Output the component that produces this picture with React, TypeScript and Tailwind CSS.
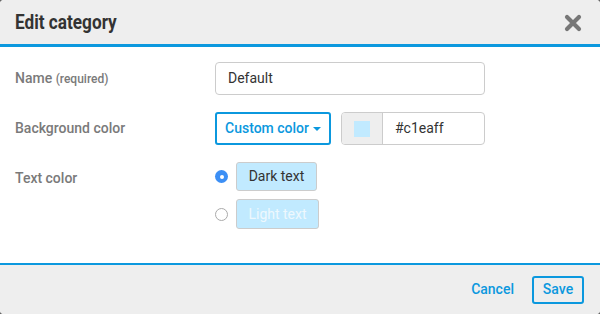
import React from "react";

function Label({ children }: { children: React.ReactNode }) {
  return (
    <div className="w-[200px] text-[14px] font-medium text-[#7a7a7a]">{children}</div>
  );
}

export default function App() {
  return (
    <div className="h-[314px] w-[600px] bg-[#666] font-['Roboto',sans-serif]">
      <div className="flex h-full flex-col overflow-hidden rounded-[4px] bg-white">
        <div className="flex h-[47px] items-center justify-between border-b-[3px] border-[#0b98de] bg-[#eee] pl-[15px] pr-[18px]">
          <h1 className="origin-left scale-x-[0.86] text-[20px] font-bold leading-none text-[#333]">
            Edit category
          </h1>
          <svg width="18" height="18" viewBox="0 0 18 18" className="mt-[1px]">
            <path
              d="M3 3 L15 15 M15 3 L3 15"
              stroke="#777"
              strokeWidth="4.2"
              strokeLinecap="round"
            />
          </svg>
        </div>

        <div className="flex flex-1 flex-col gap-[17px] pl-[15px] pt-[15px]">
          <div className="flex items-center">
            <Label>
              Name <span className="text-[12px]">(required)</span>
            </Label>
            <div className="flex h-[33px] w-[270px] items-center rounded-[4px] border border-[#ccc] px-[12px] text-[14px] text-[#333]">
              Default
            </div>
          </div>

          <div className="flex items-center">
            <Label>Background color</Label>
            <button className="flex h-[33px] w-[116px] items-center justify-center gap-[4px] rounded-[3px] border-2 border-[#0b98de] text-[14px] font-medium text-[#0b98de]">
              Custom color
              <span className="mt-[1px] border-x-[4px] border-t-[4px] border-x-transparent border-t-[#0b98de]" />
            </button>
            <div className="ml-[10px] flex h-[33px] w-[144px] overflow-hidden rounded-[4px] border border-[#ccc]">
              <div className="flex w-[41px] items-center justify-center border-r border-[#ccc] bg-[#eee]">
                <div className="h-[16px] w-[16px] bg-[#c1eaff]" />
              </div>
              <div className="flex items-center pl-[12px] text-[14px] text-[#333]">
                #c1eaff
              </div>
            </div>
          </div>

          <div className="flex items-start">
            <div className="pt-[6px]">
              <Label>Text color</Label>
            </div>
            <div className="flex flex-col gap-[8px]">
              <div className="flex items-center gap-[8px]">
                <span className="flex h-[13px] w-[13px] items-center justify-center rounded-full bg-[#3c8ff5]">
                  <span className="h-[4px] w-[4px] rounded-full bg-white" />
                </span>
                <div className="flex h-[29px] w-[81px] items-center justify-center rounded-[3px] border border-[#ccc] bg-[#c1eaff] text-[14px] text-[#333]">
                  Dark text
                </div>
              </div>
              <div className="flex items-center gap-[8px]">
                <span className="h-[13px] w-[13px] rounded-full border border-[#aaa] bg-white" />
                <div className="flex h-[30px] w-[83px] items-center justify-center rounded-[3px] border border-[#ccc] bg-[#c1eaff] text-[14px] text-[#eef8fd]">
                  Light text
                </div>
              </div>
            </div>
          </div>
        </div>

        <div className="flex h-[51px] items-center justify-end gap-[18px] border-t-2 border-[#0b98de] bg-[#eee] pr-[16px]">
          <button className="text-[14px] font-medium text-[#0b98de]">Cancel</button>
          <button className="h-[28px] w-[52px] rounded-[3px] border-2 border-[#0b98de] text-[14px] font-medium text-[#0b98de]">
            Save
          </button>
        </div>
      </div>
    </div>
  );
}
